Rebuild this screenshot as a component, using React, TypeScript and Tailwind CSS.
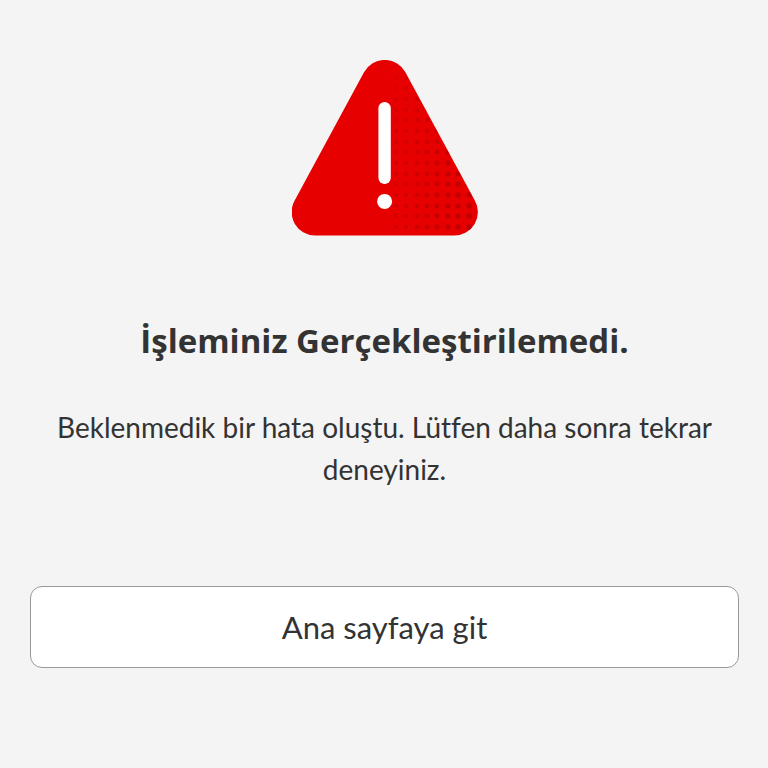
const dotColumns = [104, 114, 125, 135, 145, 156, 166, 177];
const dotRows = [167, 156, 146, 135, 124, 114, 103, 92, 82, 71, 60, 50, 39, 28, 18];

const WarningIcon = () => (
  <svg
    viewBox="0 0 186 176"
    className="h-[176px] w-[186px]"
    role="img"
    aria-label="Uyarı"
  >
    <defs>
      <clipPath id="triangle">
        <path d="M2.8 140.3 72 12.3a23.5 23.5 0 0 1 41.4 0l69.3 128A23.5 23.5 0 0 1 162 175.6H23.5A23.5 23.5 0 0 1 2.8 140.3Z" />
      </clipPath>
    </defs>
    <g clipPath="url(#triangle)">
      <rect width="186" height="176" fill="#e60000" />
      {dotRows.map((y, row) =>
        dotColumns.map((x, col) => (
          <circle
            key={`${x}-${y}`}
            cx={x}
            cy={y}
            r={2 + col * 0.1}
            fill="#9a0000"
            opacity={Math.max(0.14, 0.28 + col * 0.04 - row * 0.01)}
          />
        ))
      )}
    </g>
    <rect x="86.4" y="42" width="12.4" height="82" rx="6.2" fill="#fff" />
    <circle cx="92.6" cy="141.4" r="7.5" fill="#fff" />
  </svg>
);

export default function App() {
  const goHome = () => {
    window.location.hash = "";
  };

  return (
    <main
      lang="tr"
      className="flex min-h-screen flex-col items-center bg-[#f4f4f4] pt-[60px] pr-[29px] pb-10 pl-[30px] text-center font-[Lato,sans-serif] text-[#333333] [font-variant-ligatures:no-common-ligatures]"
    >
      <WarningIcon />
      <h1 className="mt-20 font-['Open_Sans',sans-serif] text-[33px] leading-[50px] font-bold">
        İşleminiz Gerçekleştirilemedi.
      </h1>
      <p className="mt-10 px-6 text-[28px] leading-[42px]">
        Beklenmedik bir hata oluştu. Lütfen daha sonra tekrar deneyiniz.
      </p>
      <button
        type="button"
        onClick={goHome}
        className="mt-24 h-[82px] w-full cursor-pointer rounded-xl border border-[#999999] bg-white text-[31px]"
      >
        Ana sayfaya git
      </button>
    </main>
  );
}
